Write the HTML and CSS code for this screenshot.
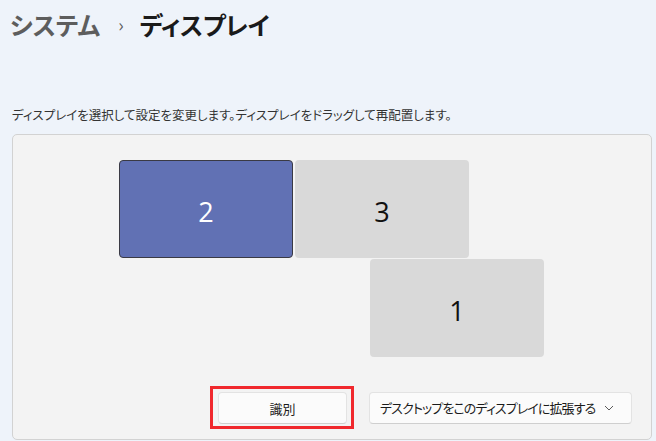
FILE: index.html
```html
<!DOCTYPE html>
<html lang="ja">
<head>
  <meta charset="UTF-8" />
  <title>ディスプレイ</title>
  <link rel="stylesheet" href="styles.css">
</head>
<body>
  <header class="crumbs">
    <span class="crumb-parent">システム</span>
    <span class="crumb-sep">›</span>
    <span class="crumb-current">ディスプレイ</span>
  </header>

  <p class="hint">ディスプレイを選択して設定を変更します。ディスプレイをドラッグして再配置します。</p>

  <section class="panel">
    <div class="canvas">
      <div class="monitor selected m2">2</div>
      <div class="monitor m3">3</div>
      <div class="monitor m1">1</div>
    </div>
    <div class="actions">
      <div class="highlight">
        <button class="btn">識別</button>
      </div>
      <div class="dropdown">
        <span>デスクトップをこのディスプレイに拡張する</span>
        <svg class="chev" width="10" height="6" viewBox="0 0 10 6"><path d="M1 1l4 4 4-4" fill="none" stroke="#5a5a5a" stroke-width="1"/></svg>
      </div>
    </div>
  </section>
</body>
</html>
```

FILE: styles.css
```css
body {
  margin: 0;
  background: #eef3fa;
  font-family: "Noto Sans CJK JP", "Noto Sans", sans-serif;
  font-feature-settings: "palt";
  color: #1b1b1b;
  height: 441px;
  overflow: hidden;
}

.crumbs {
  display: flex;
  align-items: center;
  padding: 2px 0 0 10px;
  height: 44px;
  font-size: 24.5px;
  font-weight: 700;
}

.crumb-parent {
  color: #5d5d5d;
}

.crumb-sep {
  color: #5d5d5d;
  font-size: 18px;
  font-weight: 400;
  margin: 0 16px 0 18px;
}

.crumb-current {
  color: #1a1a1a;
  letter-spacing: -0.3px;
}

.hint {
  margin: 60px 0 0 12px;
  font-size: 12.5px;
  color: #333;
  line-height: 18px;
}

.panel {
  margin: 10px 0 0 12px;
  width: 640px;
  height: 306px;
  box-sizing: border-box;
  background: #f3f3f3;
  border: 1px solid #d2d2d2;
  border-radius: 5px;
  display: flex;
  flex-direction: column;
}

.canvas {
  position: relative;
  height: 251px;
}

.monitor {
  position: absolute;
  width: 174px;
  height: 98px;
  box-sizing: border-box;
  padding-top: 5px;
  background: #d9d9d9;
  border-radius: 4px;
  display: flex;
  align-items: center;
  justify-content: center;
  font-family: "Open Sans", "Noto Sans", sans-serif;
  font-size: 27px;
  color: #111;
}

.monitor.selected {
  background: #6171b4;
  border: 1px solid #3a3a44;
  color: #fff;
}

.m2 { left: 106px; top: 25px; }
.m3 { left: 282px; top: 25px; }
.m1 { left: 357px; top: 124px; }

.actions {
  display: flex;
  justify-content: flex-end;
  align-items: center;
  gap: 15px;
  padding-right: 19px;
}

.highlight {
  border: 3px solid #f0282d;
  padding: 3px 4px 2px 5px;
}

.btn {
  width: 129px;
  height: 32px;
  background: #fbfbfb;
  border: 1px solid #e3e3e3;
  border-bottom-color: #cfcfcf;
  border-radius: 4px;
  font-family: inherit;
  font-size: 13px;
  color: #1b1b1b;
}

.dropdown {
  width: 263px;
  height: 32px;
  box-sizing: border-box;
  background: #fbfbfb;
  border: 1px solid #e3e3e3;
  border-bottom-color: #cfcfcf;
  border-radius: 4px;
  display: flex;
  align-items: center;
  justify-content: space-between;
  padding: 0 17px 0 10px;
  font-size: 13px;
  letter-spacing: -0.9px;
  white-space: nowrap;
  color: #1b1b1b;
}

.chev {
  flex-shrink: 0;
}
```
